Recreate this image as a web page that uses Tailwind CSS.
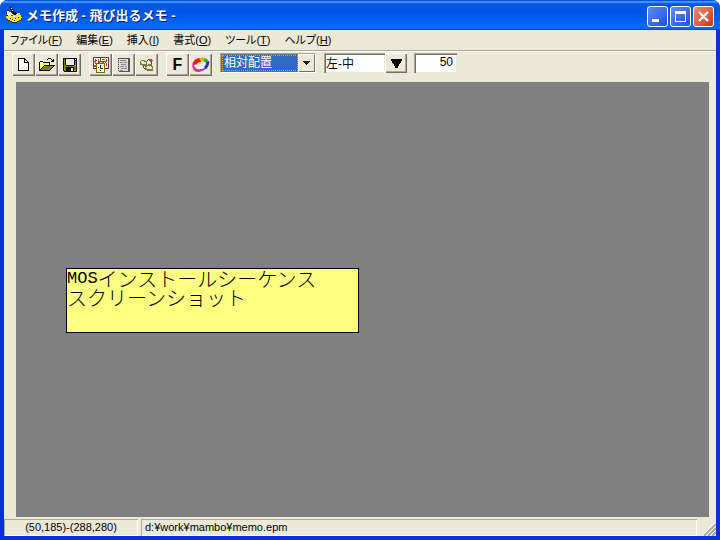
<!DOCTYPE html>
<html lang="ja">
<head>
    <meta charset="UTF-8">
    <meta name="viewport" content="width=device-width, initial-scale=1.0">
    <title>メモ作成 - 飛び出るメモ -</title>
    <script src="https://cdn.jsdelivr.net/npm/@tailwindcss/browser@4"></script>
</head>
<body class="bg-white text-black text-[12px] leading-4 font-['Liberation_Sans','Noto_Sans_CJK_JP',sans-serif]">
    <div class="h-screen flex flex-col bg-[#0831d9] rounded-t-lg overflow-hidden">

        <!-- title bar -->
        <header class="h-[30px] shrink-0 flex items-center px-[6px] bg-linear-to-b from-[#0a5be0] from-0% via-[#0054e3] via-40% to-[#0668fc] to-85% shadow-[inset_0_1px_0_#0a50d8,inset_0_3px_1px_#3c94ff,inset_0_-1px_0_#0248c8]">
            <svg class="w-4 h-4 shrink-0" viewBox="0 0 16 16" shape-rendering="crispEdges" aria-hidden="true">
                <path d="M0 9h2v-1h3v1h2V8h2V7h2V6h3v2h1v2h1v2h-1v1h-2v1h-2v1H6v-1H4v-1H2v-1H1v-1H0z" fill="#ffe818"/>
                <path d="M3 9h2v1H3zM7 9h2v1H7zM11 7h1v1h-1z" fill="#fffac0"/>
                <path d="M1 12h1v1H1zM2 13h2v1H2zM4 14h2v1H4zM6 15h5v1H6zM11 14h2v1h-2zM13 13h2v1h-2zM15 11h1v2h-1zM6 12h1v1H6zM9 11h1v1H9zM12 10h1v1h-1zM8 13h1v1H8zM4 11h1v1H4z" fill="#3c3400"/>
                <path d="M1 4h2v1h2v1h2v2H5v1H2V8H1z" fill="#f4f4f4"/>
                <path d="M4 0h1v1h1v1h1v2h1v1h2v1h1v1h-1v1H8V7H6V5H5V3H4zM2 3h1v1H2zM0 5h1v3H0zM1 8h1v1H1z" fill="#101010"/>
                <path d="M5 1h1v1H5zM6 3h1v1H6z" fill="#e8e8e8"/>
            </svg>
            <h1 class="ml-1 flex-1 text-[13px] leading-5 pt-[2px] font-bold text-white whitespace-nowrap [text-shadow:1px_1px_#0a1883]">メモ作成 - 飛び出るメモ -</h1>
            <div class="flex gap-[2px] pt-[2px]">
                <button class="size-[21px] rounded-[3px] border border-white bg-linear-to-br from-[#5d8cf2] to-[#1d4fe0]" aria-label="最小化">
                    <svg class="w-[19px] h-[19px]" viewBox="0 0 19 19"><path d="M4 12h7v3H4z" fill="#fff"/></svg>
                </button>
                <button class="size-[21px] rounded-[3px] border border-white bg-linear-to-br from-[#5d8cf2] to-[#1d4fe0]" aria-label="最大化">
                    <svg class="w-[19px] h-[19px]" viewBox="0 0 19 19"><path d="M4 4h11v11H4zM5 7v7h9V7z" fill="#fff" fill-rule="evenodd"/></svg>
                </button>
                <button class="size-[21px] rounded-[3px] border border-white bg-linear-to-br from-[#ee8b6e] to-[#c8320c]" aria-label="閉じる">
                    <svg class="w-[19px] h-[19px]" viewBox="0 0 19 19"><path d="M5 5l9 9M14 5l-9 9" stroke="#fff" stroke-width="2.4"/></svg>
                </button>
            </div>
        </header>

        <div class="flex-1 min-h-0 mx-1 mb-1 flex flex-col bg-[#ece9d8]">

            <!-- menu -->
            <nav class="h-5 shrink-0 flex items-center gap-[14px] pl-[6px] text-[11px] whitespace-nowrap [font-feature-settings:'palt']">
                <button class="leading-4">ファイル(<u>F</u>)</button>
                <button class="leading-4">編集(<u>E</u>)</button>
                <button class="leading-4">挿入(<u>I</u>)</button>
                <button class="leading-4">書式(<u>O</u>)</button>
                <button class="leading-4">ツール(<u>T</u>)</button>
                <button class="leading-4">ヘルプ(<u>H</u>)</button>
            </nav>

            <!-- toolbar -->
            <div class="h-8 shrink-0 flex items-start pt-[2px] pl-2 border-t border-[#aca899] shadow-[inset_0_1px_0_#fff]">
                <div class="flex">
                    <button class="size-[23px] grid place-items-center shadow-[inset_1px_1px_#fff,inset_-1px_-1px_#716f64,inset_-2px_-2px_#aca899]" aria-label="新規作成">
                        <svg class="w-4 h-4" viewBox="0 0 16 16" shape-rendering="crispEdges"><path d="M2 1h7v1h1v1h1v1h1v1h1v9H2z" fill="#000"/><path d="M3 2h5v4h4v7H3zM9 3h1v1h1v1H9z" fill="#fff"/></svg>
                    </button>
                    <button class="size-[23px] grid place-items-center shadow-[inset_1px_1px_#fff,inset_-1px_-1px_#716f64,inset_-2px_-2px_#aca899]" aria-label="開く">
                        <svg class="w-4 h-4" viewBox="0 0 16 16" shape-rendering="crispEdges"><path d="M9 1h3v1H9zM8 2h1v1H8zM12 2h1v1h-1zM14 2h1v3h-3V4h1V3h1zM0 5h1V4h3v1h7v3h5v1h-1v1h-1v1h-1v1h-1v1h-1v1H0z" fill="#000"/><path d="M1 5h3v1h6v2H5v1H4v1H3v1H2v1H1z" fill="#ffff9c"/><path d="M5 9h9v1h-1v1h-1v1h-1v1H2v-1h1v-1h1v-1h1z" fill="#848200"/></svg>
                    </button>
                    <button class="size-[23px] grid place-items-center shadow-[inset_1px_1px_#fff,inset_-1px_-1px_#716f64,inset_-2px_-2px_#aca899]" aria-label="保存">
                        <svg class="w-4 h-4" viewBox="0 0 16 16" shape-rendering="crispEdges"><path d="M1 1h14v14H2v-1H1z" fill="#000"/><path d="M2 2h1v6h1v1h8V8h1V4h1v10h-2v-4H4v4H2z" fill="#848200"/><path d="M4 2h8v6H4zM13 2h1v1h-1zM9 11h2v3H9z" fill="#ece9d8"/></svg>
                    </button>
                </div>
                <div class="flex ml-2">
                    <button class="size-[23px] grid place-items-center shadow-[inset_1px_1px_#fff,inset_-1px_-1px_#716f64,inset_-2px_-2px_#aca899]" aria-label="日時の挿入">
                        <svg class="w-4 h-4" viewBox="0 0 16 16" shape-rendering="crispEdges"><path d="M0 0h16v12H0z" fill="#503c3c"/><path d="M1 1h6v10H1zM8 1h7v10H8z" fill="#fff"/><path d="M2 2h1v1h1v1H3v3H2V5H1V4h1zM5 2h1v3H5zM9 2h3v1H9zM10 4h2v1h-2zM13 2h1v3h-1v1h1v3h-1V6h-1V4h1zM1 8h2v2H1z" fill="#f02828"/><path d="M6 4h4v1h1v1h1v10H3V6h2V5h1z" fill="#6c6c00"/><path d="M4 7h7v8H4z" fill="#fbfbe4"/><path d="M7 8h1v3h2v1H7zM5 10h1v1H5zM7 13h1v1H7z" fill="#333"/><path d="M7 5h2v1H7z" fill="#e0dc60"/></svg>
                    </button>
                    <button class="size-[23px] grid place-items-center shadow-[inset_1px_1px_#fff,inset_-1px_-1px_#716f64,inset_-2px_-2px_#aca899]" aria-label="定型文">
                        <svg class="w-4 h-4" viewBox="0 0 16 16" shape-rendering="crispEdges"><path d="M2 1h12v14H3v-1H2z" fill="#555"/><path d="M3 2h9v12H3z" fill="#dcdcdc"/><path d="M2 2h1v1H2zM2 4h1v1H2zM2 6h1v1H2zM2 8h1v1H2zM2 10h1v1H2zM2 12h1v1H2z" fill="#bbb"/><path d="M4 3h6v1H4zM4 5h3v1H4zM8 5h3v1H8zM5 7h5v1H5zM4 9h4v1H4zM9 9h2v1H9zM5 11h6v1H5zM4 13h3v1H4z" fill="#858585"/></svg>
                    </button>
                    <button class="size-[23px] grid place-items-center shadow-[inset_1px_1px_#fff,inset_-1px_-1px_#716f64,inset_-2px_-2px_#aca899]" aria-label="リンク">
                        <svg class="w-4 h-4" viewBox="0 0 16 16" shape-rendering="crispEdges"><path d="M2 3h4v1h2v5H3V8H1V4h1zM7 8h2V7h4v2h1v5H8v-1H6V9h1z" fill="#7d7944"/><path d="M2 4h3v1h2v2H3V6H2zM8 9h4v1h1v2H8v-1H7v-1h1z" fill="#f0ecb0"/><path d="M8 3h1V2h2v1H9v1H8zM12 5h1v2h-1zM4 9h1v2H4zM5 11h1v1H5z" fill="#444"/><path d="M10 2h3v1h1v1h-1v1h-2V4h-1z" fill="#c04038"/><path d="M9 4h2v2H9z" fill="#fff"/></svg>
                    </button>
                </div>
                <div class="flex ml-2">
                    <button class="size-[23px] grid place-items-center font-bold text-[16px] leading-5 shadow-[inset_1px_1px_#fff,inset_-1px_-1px_#716f64,inset_-2px_-2px_#aca899]" aria-label="フォント">F</button>
                    <button class="size-[23px] grid place-items-center shadow-[inset_1px_1px_#fff,inset_-1px_-1px_#716f64,inset_-2px_-2px_#aca899]" aria-label="色">
                        <svg class="w-[18px] h-4" viewBox="0 0 18 16" fill="none"><path d="M2 6Q1 12 5 13.500Q11 14 15 9" stroke="#a040d8" stroke-width="2.500"/><path d="M2 7Q1 12 5 13.500L8 13.500" stroke="#e83070" stroke-width="2.500"/><path d="M3 8Q5 12 10 10.500Q13 9.500 15 7" stroke="#fff" stroke-width="2.500"/><path d="M2.500 7Q4 3 9 3" stroke="#f01818" stroke-width="4"/><path d="M8 3Q10 2 12.500 2.500" stroke="#ffb000" stroke-width="3.500"/><path d="M12 2.500Q14 3 15 5" stroke="#20c030" stroke-width="3.500"/><path d="M15.500 4.500Q16.500 8 13 11" stroke="#1830e0" stroke-width="3"/></svg>
                    </button>
                </div>

                <div class="relative ml-2 w-24 h-5 border border-[#aca899] border-r-white border-b-white bg-[#ece9d8]">
                    <select aria-label="配置方法" class="appearance-none block w-[78px] h-[18px] pl-[2px] border border-[#716f64] bg-[#316ac5] text-white leading-4 outline-1 outline-dotted outline-[#e89c20] -outline-offset-2">
                        <option>相対配置</option>
                    </select>
                    <span class="pointer-events-none absolute right-0 top-0 w-[17px] h-[18px] grid place-items-center bg-[#ece9d8] shadow-[inset_1px_1px_#fff,inset_-1px_-1px_#716f64]">
                        <svg class="w-[7px] h-1" viewBox="0 0 7 4" shape-rendering="crispEdges"><path d="M0 0h7v1H6v1H5v1H4v1H3V3H2V2H1V1H0z"/></svg>
                    </span>
                </div>

                <div class="flex ml-2">
                    <input aria-label="位置" value="左-中" class="w-[61px] h-5 pl-[2px] pb-[2px] bg-white leading-4 shadow-[inset_1px_1px_#aca899,inset_2px_2px_#716f64,inset_-1px_-1px_#ece9d8]">
                    <button aria-label="位置を選択" class="w-[22px] h-5 grid place-items-center shadow-[inset_1px_1px_#fff,inset_-1px_-1px_#716f64,inset_-2px_-2px_#aca899]">
                        <svg class="w-[11px] h-[9px]" viewBox="0 0 11 9" shape-rendering="crispEdges"><path d="M0 0h11v2h-1v2H9v1H8v2H7v2H4V7H3V5H2V4H1V2H0z"/></svg>
                    </button>
                </div>
                <input aria-label="余白" value="50" class="ml-[7px] w-[43px] h-5 pr-1 pb-[2px] text-right bg-white leading-4 shadow-[inset_1px_1px_#aca899,inset_2px_2px_#716f64,inset_-1px_-1px_#ece9d8]">
            </div>

            <!-- screen area with the memo on it -->
            <main class="relative flex-1 min-h-0 ml-3 mr-[7px] bg-[#808080]">
                <div class="absolute left-[50px] top-[186px] w-[293px] h-[65px] border border-black bg-[#ffff80] text-[20px] leading-5 whitespace-nowrap font-['Noto_Sans_CJK_JP',sans-serif] font-light">
                    <p class="flex h-[19px] items-center"><span class="font-['Liberation_Mono',monospace] text-[17px]">MOS</span>インストールシーケンス</p>
                    <p class="flex h-[19px] items-center">スクリーンショット</p>
                </div>
            </main>

            <!-- status bar -->
            <footer class="h-[19px] shrink-0 flex pt-[2px] gap-[3px] text-[11px]">
                <div class="w-[134px] text-center shadow-[inset_1px_1px_#aca899,inset_-1px_-1px_#fff]">(50,185)-(288,280)</div>
                <div class="flex-1 pl-1 shadow-[inset_1px_1px_#aca899,inset_-1px_-1px_#fff]">d:¥work¥mambo¥memo.epm</div>
                <svg class="w-4 h-4 self-end" viewBox="0 0 16 16" stroke="#aca899" stroke-width="2" aria-hidden="true"><path d="M4 16L16 4M8 16l8-8M12 16l4-4"/><path d="M2 16L16 2M6 16L16 6M10 16l6-6" stroke="#fff" stroke-width="1"/></svg>
            </footer>
        </div>
    </div>
</body>
</html>
